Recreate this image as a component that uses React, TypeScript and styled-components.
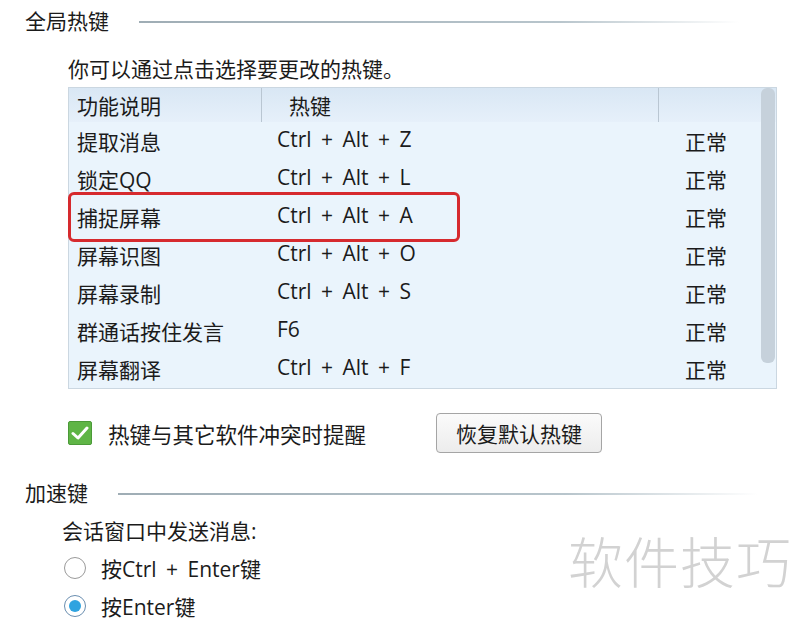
import React from 'react'
import styled, { createGlobalStyle } from 'styled-components'

const Global = createGlobalStyle`
  body {
    margin: 0;
    background: #ffffff;
    font-family: "Open Sans", "Noto Sans CJK SC", sans-serif;
    color: #1b1b1b;
    word-spacing: 4px;
  }
`

const Page = styled.div`
  position: relative;
  width: 800px;
  height: 622px;
  overflow: hidden;
  padding-top: 6px;
  box-sizing: border-box;
`

const SectionHead = styled.div<{ $top?: number }>`
  display: flex;
  align-items: center;
  margin-top: ${({ $top }) => $top ?? 0}px;
  padding-left: 25px;
  height: 30px;
`

const SectionTitle = styled.span`
  font-size: 21px;
  line-height: 30px;
  white-space: nowrap;
`

const SectionLine = styled.div<{ $gap: number; $width: number }>`
  margin-left: ${({ $gap }) => $gap}px;
  width: ${({ $width }) => $width}px;
  height: 2px;
  margin-top: 1px;
  background: linear-gradient(to right, #9fadb5, #b8c5cc 70%, rgba(220, 228, 232, 0));
`

const Body = styled.div<{ $left: number }>`
  padding-left: ${({ $left }) => $left}px;
`

const Text = styled.div<{ $top?: number }>`
  font-size: 21px;
  line-height: 30px;
  margin-top: ${({ $top }) => $top ?? 0}px;
  white-space: nowrap;
`

const Table = styled.div`
  position: relative;
  margin-top: 3px;
  width: 709px;
  border: 1px solid #cbd7e1;
  background: #eaf4fc;
  box-sizing: border-box;
`

const Grid = styled.div`
  display: grid;
  grid-template-columns: 193px 397px 1fr;
`

const HeadCell = styled.div<{ $pad: number; $sep?: boolean }>`
  height: 34px;
  display: flex;
  align-items: center;
  padding-left: ${({ $pad }) => $pad}px;
  font-size: 21px;
  background: linear-gradient(to bottom, #d9e7f4, #e6f0fa);
  border-right: ${({ $sep }) => ($sep ? '1px solid #b9c6d2' : 'none')};
  background-clip: padding-box;
`

const Cell = styled.div<{ $pad: number; $lift?: boolean }>`
  height: 38px;
  display: flex;
  align-items: center;
  padding-left: ${({ $pad }) => $pad}px;
  font-size: 21px;
  white-space: nowrap;
  padding-bottom: ${({ $lift }) => ($lift ? 5 : 0)}px;
  box-sizing: border-box;
`

const Highlight = styled.div`
  position: absolute;
  left: -1px;
  top: 104px;
  width: 392px;
  height: 50px;
  border: 3px solid #d62a2e;
  border-radius: 6px;
  box-sizing: border-box;
  pointer-events: none;
`

const Scrollbar = styled.div`
  position: absolute;
  right: 1px;
  top: 0;
  width: 14px;
  height: 275px;
  background: #c6d1db;
  border-radius: 6px;
`

const OptionRow = styled.div`
  display: flex;
  align-items: center;
  margin-top: 24px;
  height: 40px;
`

const Check = styled.span`
  width: 24px;
  height: 24px;
  border-radius: 2px;
  background: #5fb546;
  border: 1px solid #4b9a38;
  box-sizing: border-box;
  display: flex;
  align-items: center;
  justify-content: center;
`

const CheckLabel = styled.span`
  margin-left: 16px;
  font-size: 21.5px;
  white-space: nowrap;
`

const Button = styled.button`
  margin-left: 70px;
  width: 166px;
  height: 40px;
  border: 1px solid #a5a5a5;
  border-radius: 4px;
  background: linear-gradient(to bottom, #fbfbfb, #ececec);
  font-family: "Open Sans", "Noto Sans CJK SC", sans-serif;
  font-size: 21px;
  color: #1b1b1b;
  padding: 0;
`

const RadioRow = styled.div<{ $top?: number }>`
  display: flex;
  align-items: center;
  height: 38px;
  margin-top: ${({ $top }) => $top ?? 0}px;
`

const Radio = styled.span<{ $on?: boolean }>`
  width: 22px;
  height: 22px;
  margin-left: 2px;
  border-radius: 50%;
  border: 1px solid ${({ $on }) => ($on ? '#6a8eb0' : '#9a9a9a')};
  background: #fff;
  box-sizing: border-box;
  display: flex;
  align-items: center;
  justify-content: center;
  &::after {
    content: '';
    display: ${({ $on }) => ($on ? 'block' : 'none')};
    width: 12px;
    height: 12px;
    border-radius: 50%;
    background: #2fa3e0;
  }
`

const RadioLabel = styled.span`
  margin-left: 15px;
  font-size: 21px;
  white-space: nowrap;
`

const Watermark = styled.div`
  position: absolute;
  left: 568px;
  top: 526px;
  font-family: "Noto Sans CJK SC", sans-serif;
  font-weight: 300;
  font-size: 55px;
  letter-spacing: 1px;
  word-spacing: 0;
  color: #d2d2d2;
  line-height: 66px;
`

const rows = [
  ['提取消息', 'Ctrl + Alt + Z'],
  ['锁定QQ', 'Ctrl + Alt + L'],
  ['捕捉屏幕', 'Ctrl + Alt + A'],
  ['屏幕识图', 'Ctrl + Alt + O'],
  ['屏幕录制', 'Ctrl + Alt + S'],
  ['群通话按住发言', 'F6'],
  ['屏幕翻译', 'Ctrl + Alt + F'],
]

export default function App() {
  return (
    <>
      <Global />
      <Page>
        <SectionHead>
          <SectionTitle>全局热键</SectionTitle>
          <SectionLine $gap={30} $width={600} />
        </SectionHead>
        <Body $left={68}>
          <Text $top={18}>你可以通过点击选择要更改的热键。</Text>
          <Table>
            <Grid>
              <HeadCell $pad={8} $sep>功能说明</HeadCell>
              <HeadCell $pad={27} $sep>热键</HeadCell>
              <HeadCell $pad={0} />
              {rows.map(([name, key]) => (
                <React.Fragment key={name}>
                  <Cell $pad={8}>{name}</Cell>
                  <Cell $pad={15} $lift>{key}</Cell>
                  <Cell $pad={26}>正常</Cell>
                </React.Fragment>
              ))}
            </Grid>
            <Highlight />
            <Scrollbar />
          </Table>
          <OptionRow>
            <Check>
              <svg width="18" height="16" viewBox="0 0 18 16">
                <path d="M2 8.5 L7 13 L16 3" fill="none" stroke="#ffffff" strokeWidth="3" strokeLinecap="round" strokeLinejoin="round" />
              </svg>
            </Check>
            <CheckLabel>热键与其它软件冲突时提醒</CheckLabel>
            <Button>恢复默认热键</Button>
          </OptionRow>
        </Body>
        <SectionHead $top={25}>
          <SectionTitle>加速键</SectionTitle>
          <SectionLine $gap={30} $width={640} />
        </SectionHead>
        <Body $left={62}>
          <Text $top={8}>会话窗口中发送消息:</Text>
          <RadioRow $top={3}>
            <Radio />
            <RadioLabel>按Ctrl + Enter键</RadioLabel>
          </RadioRow>
          <RadioRow>
            <Radio $on />
            <RadioLabel>按Enter键</RadioLabel>
          </RadioRow>
        </Body>
        <Watermark>软件技巧</Watermark>
      </Page>
    </>
  )
}
